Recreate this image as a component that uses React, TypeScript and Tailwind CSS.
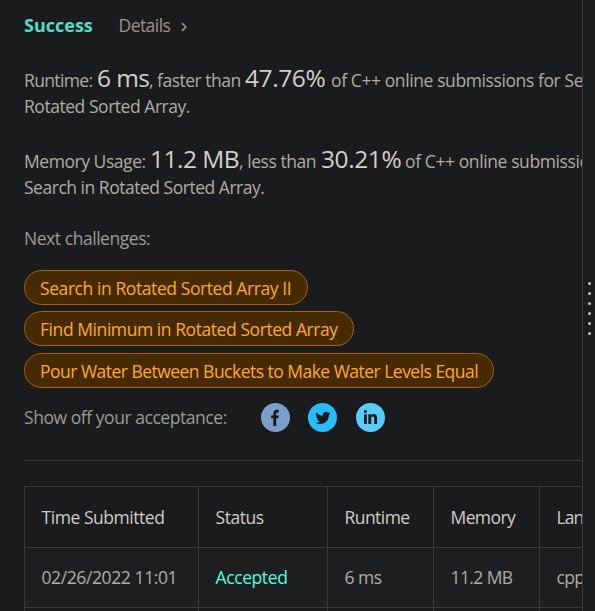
import React from "react";

const challenges = [
  { title: "Search in Rotated Sorted Array II", box: "w-[284px] mb-[6px]", text: "tracking-[-0.42px]" },
  { title: "Find Minimum in Rotated Sorted Array", box: "w-[330px] mb-[7px]", text: "tracking-[-0.43px]" },
  { title: "Pour Water Between Buckets to Make Water Levels Equal", box: "w-[470px]", text: "tracking-[-0.52px]" },
];

const columns = "grid grid-cols-[174px_129px_106px_106px_120px]";
const cell = "border-r border-b border-[#38393b] pl-[16.5px] flex items-center";

function Big({ children, className }: { children: React.ReactNode; className: string }) {
  return <span className={`inline-block shrink-0 text-[24.5px] leading-[26px] text-[#d3cfc9] ${className}`}>{children}</span>;
}

function Seg({ children, className }: { children: React.ReactNode; className: string }) {
  return <span className={`inline-block shrink-0 whitespace-pre ${className}`}>{children}</span>;
}

function Social() {
  return (
    <div className="flex pt-[3px]">
      <svg width="29" height="29" viewBox="0 0 29 29" className="mr-[18px]">
        <circle cx="14.5" cy="14.5" r="14.5" fill="#7b9fca" />
        <path d="M12.3 23v-7.700H10v-2.900h2.300v-2.100c0-2.300 1.400-3.500 3.500-3.500.9 0 1.600.1 2.100.2v2.400h-1.400c-1 0-1.300.6-1.300 1.200v1.800h2.600l-.4 2.900h-2.200V23z" fill="#1a1b1c" />
      </svg>
      <svg width="29" height="29" viewBox="0 0 29 29" className="mr-[19px]">
        <circle cx="14.5" cy="14.5" r="14.5" fill="#25bdfc" />
        <g transform="translate(7.4 7.4) scale(.63)">
          <path d="M23.95 4.57a10 10 0 01-2.82.77 4.96 4.96 0 002.16-2.72c-.95.55-2 .95-3.13 1.18a4.92 4.92 0 00-8.38 4.48C7.69 8.1 4.07 6.13 1.64 3.16a4.92 4.92 0 001.52 6.57 4.9 4.9 0 01-2.23-.61v.06a4.92 4.92 0 003.95 4.83 5 5 0 01-2.21.08 4.94 4.94 0 004.6 3.42A9.87 9.87 0 010 19.54a13.99 13.99 0 007.56 2.21c9.05 0 14-7.5 14-13.98 0-.21 0-.42-.02-.63a9.94 9.94 0 002.46-2.55z" fill="#1a1b1c" />
        </g>
      </svg>
      <svg width="29" height="29" viewBox="0 0 29 29">
        <circle cx="14.5" cy="14.5" r="14.5" fill="#5bcbff" />
        <circle cx="9.4" cy="8.500" r="1.600" fill="#1a1b1c" />
        <path d="M8 11.300h2.800V21H8zM12.300 11.300h2.600v1.200c.5-.8 1.400-1.400 2.800-1.400 2.300 0 3.400 1.500 3.400 4V21h-2.900v-5.200c0-1.400-.4-2.200-1.400-2.200-1.100 0-1.600.8-1.600 2.200V21h-2.900z" fill="#1a1b1c" />
      </svg>
    </div>
  );
}

export default function App() {
  return (
    <div className="flex h-[611px] w-[595px] overflow-hidden bg-[#1a1b1c] font-['Open_Sans','Noto_Sans',sans-serif] text-[17.5px] leading-[26px] text-[#b1aca4]">
      <main className="h-full w-[583px] shrink-0 overflow-hidden border-r border-[#3b3c3e] pl-6 pt-3 whitespace-nowrap">
        <header className="flex h-[26px]">
          <h1 className="w-[94.500px] text-[18px] font-bold tracking-[0px] text-[#57dcca]">Success</h1>
          <span className="w-[61.500px] tracking-[-0.55px] text-[#9d958a]">Details</span>
          <svg width="8" height="10" viewBox="0 0 8 10" className="mt-[10px]" fill="none" stroke="#a39c91" strokeWidth="1.5">
            <path d="M2 1l3.800 4L2 9" />
          </svg>
        </header>

        <section className="mt-[27px] flex h-[28px] items-baseline">
          <Seg className="w-[73px] tracking-[-0.65px]">Runtime:</Seg>
          <Big className="w-[52px] tracking-[-0.6px]">6 ms</Big>
          <Seg className="w-[96px] tracking-[-0.5px]">, faster than</Seg>
          <Big className="w-[86px] tracking-[-0.4px]">47.76%</Big>
          <Seg className="tracking-[-0.4px]">of C++ online submissions for Search in</Seg>
        </section>
        <div className="h-[26px] tracking-[-0.46px]">Rotated Sorted Array.</div>

        <section className="mt-[27px] flex h-[28px] items-baseline">
          <Seg className="w-[126px] tracking-[-0.45px]">Memory Usage:</Seg>
          <Big className="w-[89px] tracking-[-0.5px]">11.2 MB</Big>
          <Seg className="w-[82px] tracking-[-0.45px]">, less than</Seg>
          <Big className="w-[84px] tracking-[-0.4px]">30.21%</Big>
          <Seg className="tracking-[-0.4px]">of C++ online submissions for</Seg>
        </section>
        <div className="h-[26px] tracking-[-0.48px]">Search in Rotated Sorted Array.</div>

        <div className="mt-[25px] mb-[19px] h-[26px] tracking-[-0.45px] text-[#9e9a94]">Next challenges:</div>
        {challenges.map((c) => (
          <div key={c.title} className={`h-[35px] rounded-full border border-[#a66300] bg-[#462a02] pl-[15px] pt-px leading-[33px] text-[#ffa929] ${c.box} ${c.text}`}>
            {c.title}
          </div>
        ))}

        <div className="mt-3 flex h-[61px] border-b border-[#38393b] text-[#9e9a94]">
          <span className="w-[237px] pt-1 tracking-[-0.45px]">Show off your acceptance:</span>
          <Social />
        </div>

        <div className="mt-[25px] w-[636px] border-l border-t border-[#38393b]">
          <div className={`${columns} h-[61px] text-[#d0ccc6]`}>
            <div className={`${cell} tracking-[-0.45px]`}>Time Submitted</div>
            <div className={`${cell} tracking-[-0.45px]`}>Status</div>
            <div className={`${cell} tracking-[-0.55px]`}>Runtime</div>
            <div className={`${cell} tracking-[-0.6px]`}>Memory</div>
            <div className={`${cell} tracking-[-0.9px]`}>Lang</div>
          </div>
          <div className={`${columns} h-[60px] bg-[#1d1e1f]`}>
            <div className={`${cell} pb-px tracking-[-0.4px]`}>02/26/2022 11:01</div>
            <div className={`${cell} pb-px font-medium tracking-[-0.4px] text-[#4dffdc]`}>Accepted</div>
            <div className={`${cell} pb-px tracking-[-0.5px]`}>6 ms</div>
            <div className={`${cell} pb-px tracking-[-0.6px]`}>11.2 MB</div>
            <div className={`${cell} pb-px tracking-[-0.7px]`}>cpp</div>
          </div>
          <div className={`${columns} h-[60px]`}>
            {[0, 1, 2, 3, 4].map((i) => <div key={i} className={cell} />)}
          </div>
        </div>
      </main>
      <aside className="flex flex-1 flex-col gap-[7px] bg-[#1b1c1d] pl-[5px] pt-[282px]">
        {[0, 1, 2, 3, 4, 5].map((i) => <i key={i} className="size-[3px] shrink-0 rounded-full bg-[#c9c4bb]" />)}
      </aside>
    </div>
  );
}
